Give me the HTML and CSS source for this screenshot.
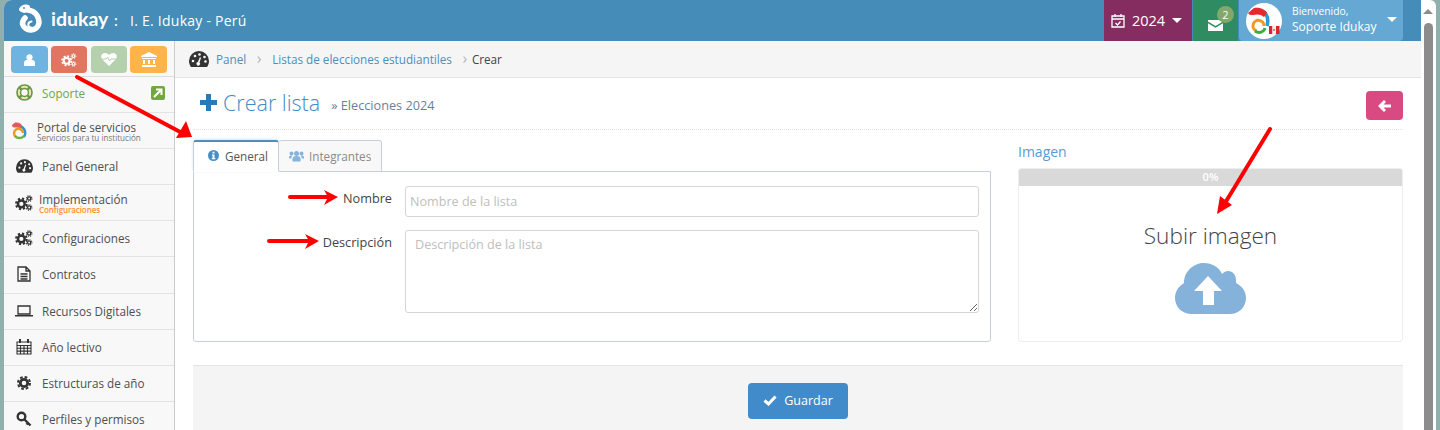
FILE: index.html
```html
<!DOCTYPE html>
<html lang="es">
<head>
<meta charset="utf-8">
<title>Crear lista</title>
<link rel="stylesheet" href="styles.css">
</head>
<body>
<svg class="defs" width="0" height="0" aria-hidden="true">
  <defs>
    <symbol id="cogs" viewBox="0 0 20 18">
      <g fill="none" stroke="currentColor">
        <circle cx="7" cy="10" r="3.800" stroke-width="2.800"/>
        <circle cx="7" cy="10" r="6" stroke-width="2.200" stroke-dasharray="2.500 2.210"/>
        <circle cx="15.800" cy="4" r="1.800" stroke-width="1.500"/>
        <circle cx="15.800" cy="4" r="3.100" stroke-width="1.200" stroke-dasharray="1.300 1.130"/>
        <circle cx="15.800" cy="14" r="1.800" stroke-width="1.500"/>
        <circle cx="15.800" cy="14" r="3.100" stroke-width="1.200" stroke-dasharray="1.300 1.130"/>
      </g>
    </symbol>
    <symbol id="gauge" viewBox="0 0 20 16">
      <path fill="currentColor" d="M10 0a10 10 0 0 0-10 10c0 2.300.8 4.300 2 6h16c1.200-1.700 2-3.700 2-6a10 10 0 0 0-10-10z"/>
      <g fill="#f8f8f8"><circle cx="4" cy="10" r="1.300"/><circle cx="6" cy="5" r="1.300"/><circle cx="10.500" cy="3.500" r="1.300"/><circle cx="15.500" cy="6" r="1.300"/><circle cx="16.500" cy="10.500" r="1.300"/><path d="M11 6l1 1-1.500 4.500a1.800 1.800 0 1 1-1.600-.4z"/></g>
    </symbol>
  </defs>
</svg>
<div class="shell">
  <div class="app">
    <header class="topbar">
      <div class="brand">
        <svg class="logo" width="23" height="30" viewBox="0 0 23 30"><path fill="none" stroke="#fff" stroke-width="5.500" stroke-linecap="round" d="M9 6C16 7 20 12 20 19A8.500 8.500 0 0 1 3.500 20C3.500 17.500 4.500 15.500 6 14"/><path fill="none" stroke="#fff" stroke-width="2" stroke-linecap="round" d="M12 23.500C8.500 23.500 8 18 12.500 17.500"/><path fill="#fff" d="M0 5C1.500 1 7-.5 10.500 1.500L12 7 5.500 9C3 8 0 8 0 5z"/><circle cx="5" cy="4" r=".9" fill="#458cb8"/></svg>
        <span class="wordmark">idukay</span>
        <span class="colon">:</span>
        <span class="school">I. E. Idukay - Perú</span>
      </div>
      <div class="top-actions">
        <div class="year">
          <svg width="14" height="15" viewBox="0 0 14 15"><path fill="none" stroke="#fff" stroke-width="1.300" d="M1 3h12v11H1zM1 6h12M4 1v3M10 1v3"/><path fill="none" stroke="#fff" stroke-width="1.300" d="M4.500 10l2 2 3-3.500"/></svg>
          <span>2024</span><i class="caret"></i>
        </div>
        <div class="mail">
          <svg width="15" height="11" viewBox="0 0 15 11"><path fill="#fff" d="M0 0h15v1.500L7.500 6 0 1.500zM0 3.200l7.500 4.500 7.500-4.500V11H0z"/></svg>
          <span class="badge">2</span>
        </div>
        <div class="user">
          <svg class="avatar" width="36" height="36" viewBox="0 0 36 36"><circle cx="18" cy="18" r="18" fill="#fff"/><path fill="none" stroke="#2b9ad6" stroke-width="3.500" d="M16 8c5 2 7 8 5 15"/><path fill="#e8272f" d="M2 10L8 5c5-1 11 1 13 5l-3 4c-3-3-7-3-11-2-2 0-4 0-5-2z"/><path fill="none" stroke="#f39a1e" stroke-width="3" d="M18 23a5.500 5.500 0 1 0-7.500 5"/><path fill="none" stroke="#3dab44" stroke-width="3" d="M9 28c4 3 9 1 10-3"/><path fill="#d9262e" d="M23 23h3.500v8H23zM30 23h3.500v8H30z"/><path fill="#eee" d="M26.500 23H30v8h-3.500z"/><circle cx="28" cy="27" r="1" fill="#6a9a45"/></svg>
          <div class="user-text"><small>Bienvenido,</small><span>Soporte Idukay</span></div>
          <i class="caret"></i>
        </div>
      </div>
    </header>
    <div class="body-row">
      <aside class="sidebar">
        <div class="tiles">
          <span class="tile t-blue"><svg width="11" height="12" viewBox="0 0 10 11"><circle cx="5" cy="3" r="2.800" fill="#fff"/><path fill="#fff" d="M0 11V8c0-2 2-3 5-3s5 1 5 3v3z"/></svg></span>
          <span class="tile t-red"><svg width="16" height="14"><use href="#cogs"/></svg></span>
          <span class="tile t-green"><svg width="16" height="13" viewBox="0 0 16 13"><path fill="#fff" d="M8 13L1 6C-1 3 1 0 4 0c2 0 3 1 4 2 1-1 2-2 4-2 3 0 5 3 3 6z"/><path fill="none" stroke="#b5d0ac" d="M1 6h4l1.500-2 2 4 1.500-2h5"/></svg></span>
          <span class="tile t-orange"><svg width="16" height="15" viewBox="0 0 16 15"><path fill="#fff" d="M8 0l8 4v1H0V4zM1 6h14v1H1zM2 8h2v4H2zM7 8h2v4H7zM12 8h2v4h-2zM1 13h14v2H1z"/></svg></span>
        </div>
        <nav class="menu">
          <a class="item item-support">
            <span class="ico"><svg width="17" height="17" viewBox="0 0 17 17"><circle cx="8.500" cy="8.500" r="6" fill="none" stroke="#f3e2bd" stroke-width="3"/><circle cx="8.500" cy="8.500" r="7.500" fill="none" stroke="#6a9a45" stroke-width="1.700"/><circle cx="8.500" cy="8.500" r="4" fill="none" stroke="#6a9a45" stroke-width="1.500"/><path fill="none" stroke="#6a9a45" stroke-width="2.400" d="M3.200 3.200l2.600 2.600M13.800 3.200l-2.600 2.600M3.200 13.800l2.600-2.600M13.800 13.800l-2.600-2.600"/></svg></span>
            <span class="label">Soporte</span>
            <span class="ext"><svg width="10" height="10" viewBox="0 0 10 10"><path fill="none" stroke="#fff" stroke-width="2" d="M1 9l7-7M3 1.500h5.500V7"/></svg></span>
          </a>
          <a class="item item-portal">
            <span class="ico"><svg width="15" height="18" viewBox="0 0 15 18"><path fill="none" stroke="#3a8fd0" stroke-width="2.500" d="M8 4c5 2 6.500 7 4 11"/><path fill="#e25a5a" d="M0 3L3 .5c3-.5 6 .5 7 3L8 6C6 5 4 5.500 2 5.500 1 5.500 0 4.500 0 3z"/><path fill="none" stroke="#f39a1e" stroke-width="2.500" d="M11 11a4.500 4.500 0 1 0-7 4"/><path fill="none" stroke="#6cb33f" stroke-width="2.500" d="M3 14c2.500 3 7 2.500 9 0"/></svg></span>
            <span class="stack"><span class="label">Portal de servicios</span><small>Servicios para tu institución</small></span>
          </a>
          <a class="item"><span class="ico"><svg width="17" height="14"><use href="#gauge"/></svg></span><span class="label">Panel General</span></a>
          <a class="item item-impl">
            <span class="ico"><svg width="18" height="16"><use href="#cogs"/></svg></span>
            <span class="stack"><span class="label">Implementación</span><small class="orange">Configuraciones</small></span>
          </a>
          <a class="item"><span class="ico"><svg width="18" height="16"><use href="#cogs"/></svg></span><span class="label">Configuraciones</span></a>
          <a class="item item-tall"><span class="ico"><svg width="14" height="16" viewBox="0 0 14 16"><path fill="none" stroke="#333" stroke-width="1.300" d="M1 1h8l4 4v10H1zM9 1v4h4M3.500 8h7M3.500 10.500h7M3.500 13h7"/></svg></span><span class="label">Contratos</span></a>
          <a class="item"><span class="ico"><svg width="18" height="12" viewBox="0 0 18 12"><path fill="none" stroke="#333" stroke-width="1.300" d="M3 1h12v8H3z"/><path fill="#333" d="M0 10h18v1.500H0z"/></svg></span><span class="label">Recursos Digitales</span></a>
          <a class="item"><span class="ico"><svg width="16" height="16" viewBox="0 0 16 16"><path fill="none" stroke="#333" stroke-width="1.100" d="M1 3h14v12H1zM1 6.500h14M1 9.300h14M1 12.100h14M4.500 6.500V15M8 6.500V15M11.500 6.500V15"/><path fill="#333" d="M3 0h2v4H3zM11 0h2v4h-2z"/></svg></span><span class="label">Año lectivo</span></a>
          <a class="item"><span class="ico"><svg width="14" height="14" viewBox="0 0 14 14"><circle cx="7" cy="7" r="3.700" fill="none" stroke="#333" stroke-width="2.800"/><circle cx="7" cy="7" r="6" fill="none" stroke="#333" stroke-width="2" stroke-dasharray="2.700 2"/></svg></span><span class="label">Estructuras de año</span></a>
          <a class="item"><span class="ico"><svg width="16" height="16" viewBox="0 0 16 16"><circle cx="5.500" cy="5.500" r="3.800" fill="none" stroke="#333" stroke-width="2.400"/><path fill="none" stroke="#333" stroke-width="2.400" d="M8.500 8.500l6 6M12 12l-1.500 1.500"/></svg></span><span class="label">Perfiles y permisos</span></a>
        </nav>
      </aside>
      <main class="main">
        <div class="crumbs">
          <svg width="20" height="16"><use href="#gauge"/></svg>
          <a class="crumb-first">Panel</a><span class="sep">›</span>
          <a>Listas de elecciones estudiantiles</a><span class="sep">›</span>
          <span class="current">Crear</span>
        </div>
        <div class="content">
          <div class="page-head">
            <h1><svg class="plus" width="17" height="17" viewBox="0 0 17 17"><path fill="#2a7ab8" d="M6 0h5v6h6v5h-6v6H6v-6H0V6h6z"/></svg><span>Crear lista</span><small>» Elecciones 2024</small></h1>
            <button class="back"><svg width="13" height="12" viewBox="0 0 13 12"><path fill="#fff" d="M6 0l2 2-2.500 2.500H13v3H5.500L8 10l-2 2-6-6z"/></svg></button>
          </div>
          <div class="columns">
            <section class="col-form">
              <div class="tabs">
                <div class="tab active"><svg width="11" height="11" viewBox="0 0 11 11"><circle cx="5.500" cy="5.500" r="5.500" fill="#478fca"/><path fill="#fff" d="M4.500 1.800h2v1.700h-2zM4 4.500h2.500v3.400h.8V9.300H3.800V7.900h.8V5.800H4z"/></svg>General</div>
                <div class="tab"><svg width="15" height="12" viewBox="0 0 15 11"><g fill="#85b4dc"><circle cx="7.500" cy="3" r="2.500"/><circle cx="2.500" cy="3" r="2"/><circle cx="12.500" cy="3" r="2"/><path d="M3.500 11V8c0-1.500 1.500-2.500 4-2.500s4 1 4 2.500v3zM0 8V6.500C0 5.500 1 5 2.800 5L3 6c-.5.500-.8 1-.8 2zM15 8V6.500c0-1-1-1.500-2.800-1.500L12 6c.5.500.8 1 .8 2z"/></g></svg>Integrantes</div>
              </div>
              <div class="tab-panel">
                <div class="field">
                  <label class="field-label">Nombre</label>
                  <input class="input" type="text" placeholder="Nombre de la lista">
                </div>
                <div class="field">
                  <label class="field-label">Descripción</label>
                  <textarea class="textarea" placeholder="Descripción de la lista"></textarea>
                </div>
              </div>
            </section>
            <section class="col-image">
              <h2>Imagen</h2>
              <div class="upload">
                <div class="progress">0%</div>
                <div class="upload-body">
                  <p>Subir imagen</p>
                  <svg width="71" height="51" viewBox="0 0 71 51"><path fill="#85b2db" d="M17 51C7 51 0 44 0 35c0-7 4-12 9-15C9 8 19 0 29 0c8 0 15 4 18 11 2-2 4-3 6-3 5 0 8 4 8 9v3c6 3 10 8 10 15 0 9-7 16-16 16z"/><path fill="#fff" d="M33 13L47 28H39V42H28V28H19z"/></svg>
                </div>
              </div>
            </section>
          </div>
          <div class="form-actions">
            <button class="save"><svg width="14" height="11" viewBox="0 0 14 11"><path fill="none" stroke="#fff" stroke-width="3" d="M1.500 5.500L5.500 9 12.500 1.500"/></svg>Guardar</button>
          </div>
        </div>
      </main>
    </div>
  </div>
  <div class="scrollbar"><i class="scroll-up"></i><i class="scroll-thumb"></i></div>
</div>
<svg class="annotations" width="1440" height="430" viewBox="0 0 1440 430" aria-hidden="true">
  <g fill="none" stroke="#ff0000" stroke-width="4" stroke-linecap="round">
    <path d="M77 77L184 134"/>
    <path d="M1270 129L1222 208"/>
    <path d="M290 197H332"/>
    <path d="M269 241H312"/>
  </g>
  <g fill="#ff0000">
    <path d="M192 137L176 138 186 121z"/>
    <path d="M1217 214L1220 196 1232 205z"/>
    <path d="M338 197L324 190 328 197 324 205z"/>
    <path d="M319 241L305 234 309 241 305 249z"/>
  </g>
</svg>
</body>
</html>
```
FILE: styles.css
```css
* { box-sizing: border-box; }
html, body { margin: 0; height: 430px; overflow: hidden; }
body { background: #8fb0ab; font-family: "Open Sans", "Liberation Sans", sans-serif; font-size: 13px; color: #393939; position: relative; }
.defs { position: absolute; }
.shell { display: flex; height: 430px; padding: 0 4px; }
.app { flex: 1; min-width: 0; background: #fff; display: flex; flex-direction: column; border-top-left-radius: 8px; overflow: hidden; }

.topbar { height: 41px; flex: none; background: #458cb8; display: flex; justify-content: space-between; color: #fff; }
.brand { display: flex; align-items: center; padding-left: 15px; }
.logo { margin-right: 9px; margin-top: -3px; }
.wordmark { font-family: Lato, sans-serif; font-weight: 700; font-size: 19.5px; width: 63px; margin-top: -4px; }
.colon { font-size: 14px; width: 16px; font-weight: 600; }
.school { font-size: 14px; letter-spacing: .25px; }
.top-actions { display: flex; padding-right: 18px; gap: 1px; }
.year { width: 88px; background: #852c60; display: flex; align-items: center; padding-left: 7px; font-size: 14.5px; }
.year span { margin-left: 7px; }
.year .caret { margin-left: 7px; }
.caret { width: 0; height: 0; border-left: 5px solid transparent; border-right: 5px solid transparent; border-top: 5px solid #fff; display: block; }
.mail { width: 45px; background: #2f8b62; position: relative; display: flex; align-items: center; padding: 10px 0 0 15px; }
.badge { position: absolute; left: 24px; top: 6px; width: 17px; height: 17px; border-radius: 50%; background: #82a86c; font-size: 11px; line-height: 17px; text-align: center; }
.user { width: 164px; background: #65a8d3; display: flex; align-items: center; padding-left: 7px; border-bottom-right-radius: 4px; border-bottom-left-radius: 4px; }
.avatar { flex: none; }
.user-text { margin-left: 10px; display: flex; flex-direction: column; width: 90px; line-height: 17px; white-space: nowrap; font-size: 12px; margin-top: -2px; }
.user-text small { font-size: 10.3px; line-height: 13px; }
.user .caret { margin: -3px 0 0 5px; }

.body-row { flex: 1; display: flex; min-height: 0; }
.sidebar { width: 171px; flex: none; background: #f8f8f8; border-right: 1px solid #ccc; }
.tiles { padding: 5px 0 0 7px; display: flex; gap: 3px; border-bottom: 1px solid #ddd; box-sizing: content-box; height: 30px; }
.tile { width: 36px; height: 27px; border-radius: 4px; display: flex; align-items: center; justify-content: center; color: #fff; }
.t-blue { background: #6fb3e0; width: 37px; }
.t-red { background: #e2755f; }
.t-green { background: #b5d0ac; margin-left: 1px; }
.t-orange { background: #ffb44b; width: 37px; }
.menu { display: flex; flex-direction: column; }
.item { height: 36px; display: flex; align-items: center; border-bottom: 1px solid #e3e3e3; padding: 0 0 2px 11px; font-size: 11.7px; color: #4f4f4f; white-space: nowrap; }
.item-tall { height: 37px; }
.ico { width: 18px; margin-right: 9px; display: flex; justify-content: center; color: #333; flex: none; }
.item-support { position: relative; color: #6fa83e; padding-bottom: 4px; }
.ext { position: absolute; right: 9px; top: 9px; width: 14px; height: 14px; background: #6fa83e; border-radius: 2px; display: flex; align-items: center; justify-content: center; }
.stack { display: flex; flex-direction: column; line-height: 13px; }
.stack small { font-size: 8.1px; line-height: 7px; color: #777; }
.stack .orange { color: #ff8f2e; font-size: 8px; font-weight: 600; letter-spacing: -.1px; }
.item-portal { padding: 0 0 0 8px; }
.item-portal .ico { width: 15px; margin-right: 10px; }
.item-impl { padding-bottom: 0; }
.item-impl .ico { margin-right: 6px; }

.main { flex: 1; min-width: 0; display: flex; flex-direction: column; }
.crumbs { height: 37px; flex: none; background: #f5f5f5; border-bottom: 1px solid #e5e5e5; display: flex; align-items: center; padding-left: 14px; font-size: 11.7px; color: #4c8fbd; }
.crumbs svg { color: #333; margin-right: 7px; }
.sep { color: #b5b5b5; font-size: 16px; width: 26px; text-align: center; margin-top: -3px; }
.current { color: #444; margin-left: -6px; }
.content { padding: 0 18px; flex: 1; min-height: 0; }
.page-head { height: 52px; display: flex; justify-content: space-between; align-items: flex-start; border-bottom: 1px dotted #e2e2e2; padding: 0 0 0 7px; }
h1 { margin: 9px 0 0; height: 30px; font-weight: 300; font-size: 21.5px; color: #428bca; display: flex; align-items: center; }
h1 span { margin-left: 6px; }
h1 small { font-size: 12.7px; font-weight: 400; color: #6a7f9b; margin-left: 11px; margin-top: 6px; }
.plus { margin-top: 1px; }
.back { width: 37px; height: 29px; margin-top: 13px; background: #d94a82; border: 0; border-radius: 4px; display: flex; align-items: center; justify-content: center; padding: 0; }
.columns { display: flex; gap: 27px; padding-top: 10px; height: 212px; }
.col-form { width: 798px; flex: none; display: flex; flex-direction: column; }
.tabs { display: flex; height: 32px; margin-bottom: -1px; position: relative; z-index: 1; }
.tab { height: 32px; padding: 0 10px; border: 1px solid #c5d0dc; border-radius: 3px 3px 0 0; border-left: 0; font-size: 11.7px; color: #8a8a8a; background: #f8f8f8; display: flex; align-items: center; gap: 5px; }
.tab.active { width: 86px; padding: 0 0 2px 14px; color: #555; background: #fff; border: 1px solid #c5d0dc; border-top: 2px solid #4c8fbd; border-bottom-color: #fff; box-shadow: 0 -1px 3px rgba(70,130,190,.2); gap: 6px; }
.tab-panel { flex: 1; border: 1px solid #c5d0dc; border-radius: 0 0 3px 3px; padding: 14px 11px 0 0; }
.field { display: flex; gap: 13px; margin-bottom: 13px; }
.field-label { width: 198px; text-align: right; font-size: 12.7px; color: #444; padding-top: 3px; flex: none; }
.input, .textarea { flex: 1; min-width: 0; border: 1px solid #d5d5d5; border-radius: 3px; font: 12.6px "Open Sans", sans-serif; background: #fff; }
.input { height: 31px; padding: 0 4px; }
.textarea { height: 83px; padding: 5px 9px; resize: vertical; display: block; }
.input::placeholder, .textarea::placeholder { color: #bebebe; opacity: 1; }
.col-image { width: 385px; flex: none; display: flex; flex-direction: column; }
h2 { margin: 0; font-size: 14px; font-weight: 400; color: #5a9bd5; height: 28px; line-height: 24px; flex: none; }
.upload { flex: 1; border: 1px solid #eee; border-radius: 3px; overflow: hidden; display: flex; flex-direction: column; }
.progress { height: 17px; background: #d9d9d9; color: #fff; font-size: 11px; font-weight: 600; text-align: center; line-height: 15px; flex: none; }
.upload-body { flex: 1; display: flex; flex-direction: column; align-items: center; }
.upload-body p { margin: 36px 0 14px; font-size: 22.6px; line-height: 27px; font-weight: 300; color: #444; }
.form-actions { margin-top: 23px; height: 80px; background: #f4f4f4; border-top: 1px solid #e5e5e5; display: flex; justify-content: center; padding-top: 17px; }
.save { width: 100px; height: 36px; background: #428bca; border: 0; border-radius: 4px; color: #fff; font: 12.5px "Open Sans", sans-serif; display: flex; align-items: center; justify-content: center; gap: 7px; padding: 0 0 2px; }

.scrollbar { width: 15px; flex: none; background: #fff; position: relative; border-top-right-radius: 6px; }
.scroll-up { position: absolute; left: 2px; top: 9px; width: 0; height: 0; border-left: 5px solid transparent; border-right: 5px solid transparent; border-bottom: 5px solid #8c8c8c; }
.scroll-thumb { position: absolute; left: 3px; top: 23px; bottom: 0; width: 9px; background: #8c8c8c; border-radius: 5px 5px 0 0; }
.annotations { position: absolute; left: 0; top: 0; pointer-events: none; }
```
